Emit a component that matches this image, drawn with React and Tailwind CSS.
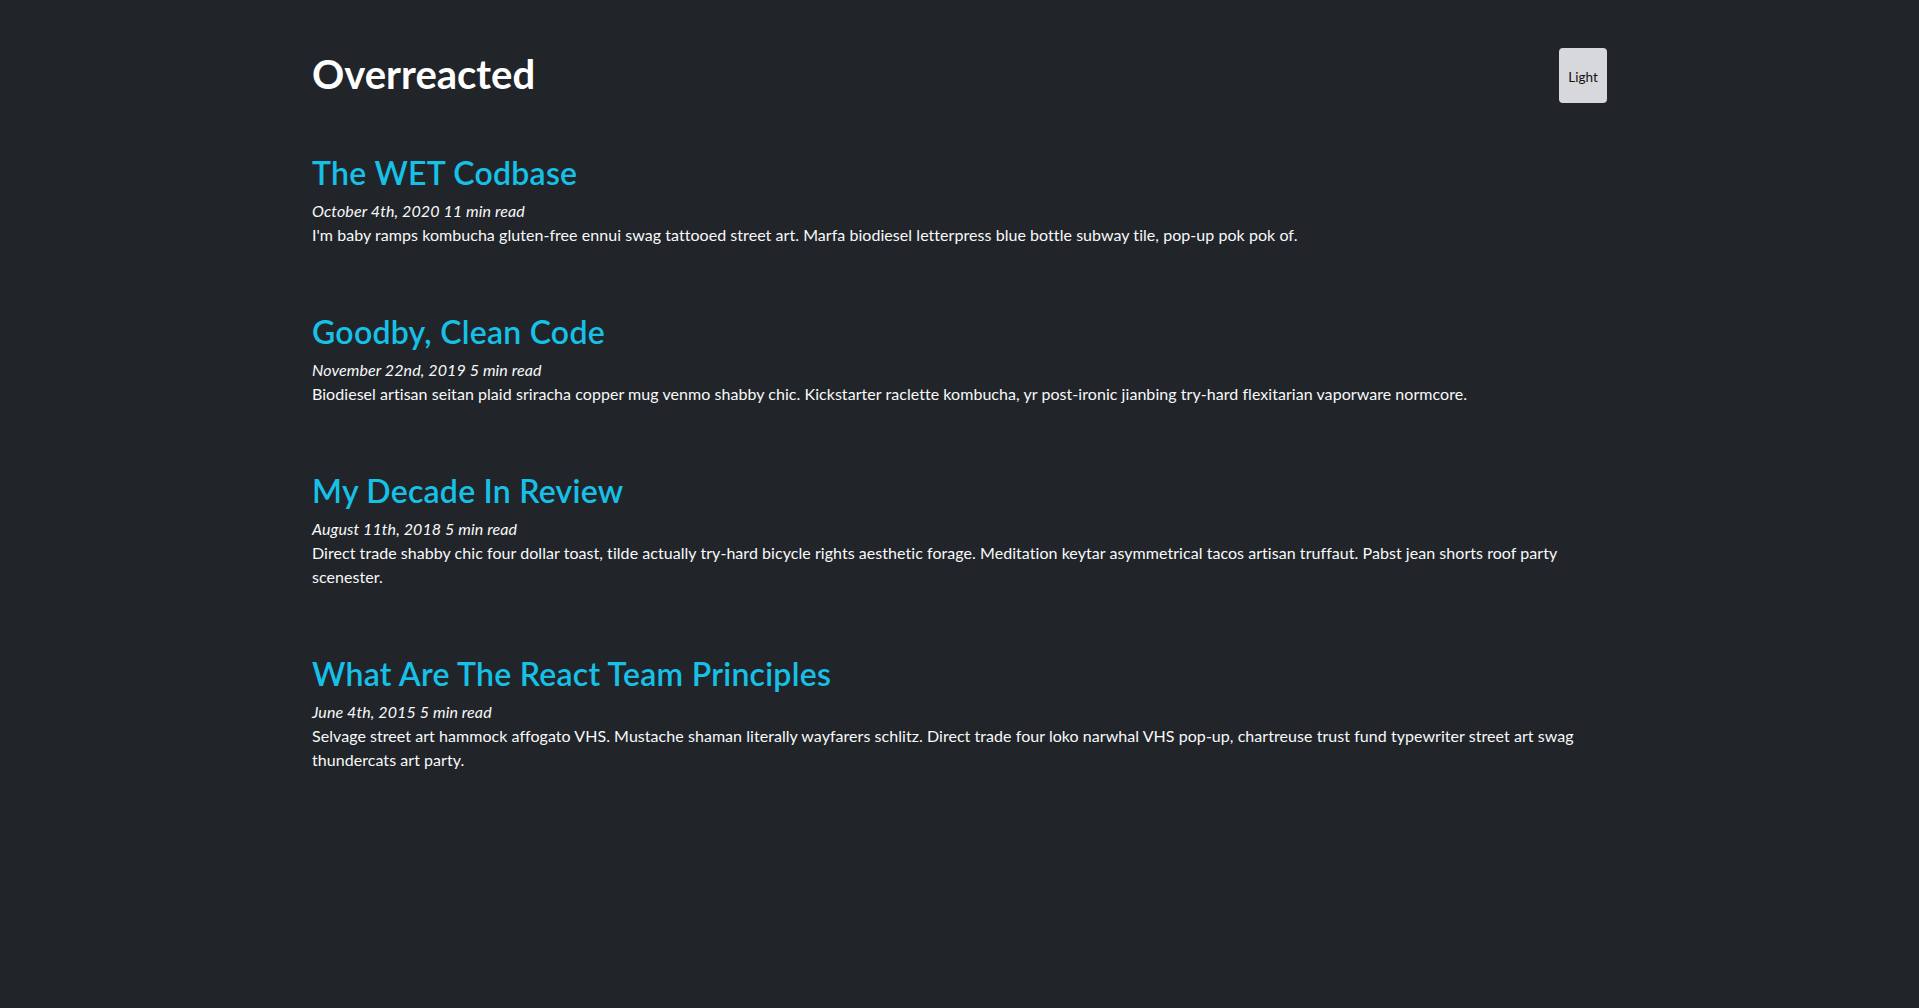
import React from "react";

const posts = [
  {
    title: "The WET Codbase",
    date: "October 4th, 2020",
    read: "11 min read",
    excerpt:
      "I'm baby ramps kombucha gluten-free ennui swag tattooed street art. Marfa biodiesel letterpress blue bottle subway tile, pop-up pok pok of.",
  },
  {
    title: "Goodby, Clean Code",
    date: "November 22nd, 2019",
    read: "5 min read",
    excerpt:
      "Biodiesel artisan seitan plaid sriracha copper mug venmo shabby chic. Kickstarter raclette kombucha, yr post-ironic jianbing try-hard flexitarian vaporware normcore.",
  },
  {
    title: "My Decade In Review",
    date: "August 11th, 2018",
    read: "5 min read",
    excerpt:
      "Direct trade shabby chic four dollar toast, tilde actually try-hard bicycle rights aesthetic forage. Meditation keytar asymmetrical tacos artisan truffaut. Pabst jean shorts roof party scenester.",
  },
  {
    title: "What Are The React Team Principles",
    date: "June 4th, 2015",
    read: "5 min read",
    excerpt:
      "Selvage street art hammock affogato VHS. Mustache shaman literally wayfarers schlitz. Direct trade four loko narwhal VHS pop-up, chartreuse trust fund typewriter street art swag thundercats art party.",
  },
];

const PostItem = ({ post }) => (
  <article>
    <h2 className="mb-[7px] text-[32px] font-semibold leading-[38px] tracking-[0.25px] text-[#17c0e6]">
      <a href="#">{post.title}</a>
    </h2>
    <p className="text-[16px] italic leading-6 tracking-[0.1px] text-[#f8f9fa]">
      {post.date} {post.read}
    </p>
    <p className="text-[16px] leading-6 tracking-[0.05px] text-[#f8f9fa]">
      {post.excerpt}
    </p>
  </article>
);

export default function App() {
  return (
    <div className="min-h-screen bg-[#212529] font-['Lato',sans-serif]">
      <div className="mx-auto w-[1295px] pt-[47px]">
        <header className="flex items-start justify-between">
          <h1 className="text-[40px] font-bold leading-[54px] text-white">
            Overreacted
          </h1>
          <button
            type="button"
            className="mt-px h-[55px] w-[48px] rounded bg-[#d6d8db] pt-[3px] text-[13.5px] text-[#111]"
          >
            Light
          </button>
        </header>

        <main className="mt-[51px] flex flex-col gap-[66px]">
          {posts.map((post) => (
            <PostItem key={post.title} post={post} />
          ))}
        </main>
      </div>
    </div>
  );
}
